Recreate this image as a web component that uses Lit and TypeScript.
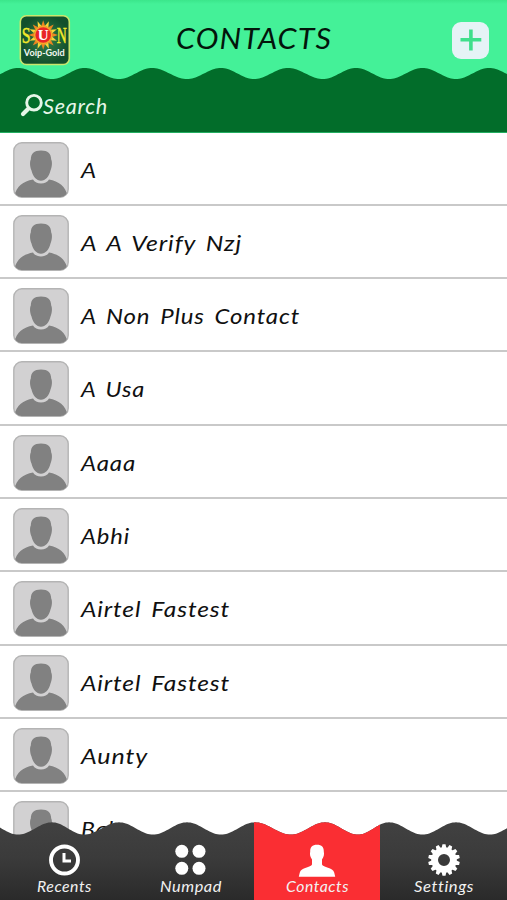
import { LitElement, html, css, svg } from "lit";
import { customElement, property } from "lit/decorators.js";

/** Closed shape with a flat bottom; its top edge swings between the given crest and trough positions. */
function wavePath(xs: number[], crestFirst: boolean, crestY: number, troughY: number, bottom: number) {
  const yAt = (i: number) => ((i % 2 === 0) === crestFirst ? crestY : troughY);
  let d = `M${xs[0]} ${bottom}`;
  for (let i = 0; i < xs.length - 1; i++) {
    for (let s = 0; s < 20; s++) {
      const t = s / 20;
      const k = (1 - Math.cos(t * Math.PI)) / 2;
      d += `L${(xs[i] + (xs[i + 1] - xs[i]) * t).toFixed(2)} ${(yAt(i) + (yAt(i + 1) - yAt(i)) * k).toFixed(2)}`;
    }
  }
  const last = xs.length - 1;
  return d + `L${xs[last]} ${yAt(last)}V${bottom}Z`;
}

const topWave = wavePath(
  [-15, 18, 52, 84.5, 119, 152, 187, 221, 254, 288, 323, 356, 389, 422.5, 456, 489, 523],
  false, 68, 79, 132.5
);
const bottomWave = wavePath(
  [-15, 18, 52, 84, 119, 153, 187, 221, 255, 291, 325, 358, 389, 422.5, 456, 490, 523],
  true, 2.3, 14.6, 80
);

const contacts: [string, number][] = [
  ["A", 16],
  ["A A Verify Nzj", 161],
  ["A Non Plus Contact", 219],
  ["A Usa", 64],
  ["Aaaa", 55],
  ["Abhi", 49],
  ["Airtel Fastest", 149],
  ["Airtel Fastest", 149],
  ["Aunty", 67],
  ["Bab", 40],
];

/** One line of slanted lettering, stretched to a given width. */
@customElement("script-label")
export class ScriptLabel extends LitElement {
  @property() text = "";
  @property({ type: Number }) width = 50;
  @property({ type: Number }) size = 22;

  static styles = css`
    :host { display: block; flex: none; }
    svg { display: block; overflow: visible; }
    text {
      font-family: Lato, "Open Sans", sans-serif; font-style: italic; fill: currentColor;
      font-variant-ligatures: none; letter-spacing: 0.035em; word-spacing: 0.14em;
    }
  `;

  render() {
    const h = Math.round(this.size * 1.2);
    return html`<svg width=${this.width} height=${h}>
      <text x="0" y=${this.size} font-size=${this.size} textLength=${this.width}
        lengthAdjust="spacingAndGlyphs">${this.text}</text>
    </svg>`;
  }
}

@customElement("contact-row")
export class ContactRow extends LitElement {
  @property() name = "";
  @property({ type: Number }) width = 50;

  static styles = css`
    :host {
      display: flex; box-sizing: border-box; height: 73.3px; flex: none;
      padding: 9.1px 0 0 13px; border-bottom: 2px solid #c9c9c9; color: #101010;
    }
    svg { flex: none; width: 56px; height: 56px; }
    script-label { margin: 14px 0 0 12px; }
  `;

  render() {
    return html`
      <svg viewBox="0 0 56 56">
        <defs><clipPath id="c"><rect x="1" y="1" width="54" height="54" rx="7.5" /></clipPath></defs>
        <rect x=".8" y=".8" width="54.4" height="54.4" rx="8" fill="#d2d1d2" stroke="#b4b4b4" stroke-width="1.4" />
        <g clip-path="url(#c)" fill="#818181">
          <path d="M1 56C3 44 10 39.500 20 37.500C21.500 40 24.500 41.500 28 41.500S34.500 40 36 37.500C46 39.500 53 44 55 56Z" />
          <path d="M28 8.500C35 8.500 38 11.500 38.200 17.500C39.500 20 39 25.500 37.500 28.500C36 34.500 32.500 38.800 28 38.800S20 34.500 18.500 28.500C17 25.500 16.500 20 17.800 17.500C18 11.500 21 8.500 28 8.500Z" />
        </g>
      </svg>
      <script-label text=${this.name} width=${this.width} size="22"></script-label>
    `;
  }
}

const clock = svg`<circle cx="16.500" cy="16" r="13.500" fill="none" stroke="#fff" stroke-width="3.900"/>
  <path d="M16 9V17H23" fill="none" stroke="#fff" stroke-width="3"/>`;
const dots = svg`<g fill="#fff"><circle cx="6.800" cy="7.300" r="6.500"/><circle cx="24" cy="7.300" r="6.500"/>
  <circle cx="6.800" cy="24.300" r="6.500"/><circle cx="24" cy="24.300" r="6.500"/></g>`;
const person = svg`<path fill="#fff" d="M16 .8C20.800 .8 23 3.300 22.800 7.500C23.400 10.500 22.800 13 21 15.500V20.500C22 23.500 32 23.500 33.200 28.500L34.200 32.800H-2.200L-1.200 28.500C0 23.500 10 23.500 11 20.500V15.500C9.200 13 8.600 10.500 9.200 7.500C9 3.300 11.200 .8 16 .8Z"/>`;
const teeth = Array.from({ length: 14 }, (_, i) => (i * 360) / 14);
const gear = svg`<g fill="#fff">${teeth.map(
  (a) => svg`<path transform="rotate(${a} 16 16)" d="M13.400 5L14.500 .2H17.500L18.600 5Z"/>`
)}</g><circle cx="16" cy="16" r="9.400" fill="none" stroke="#fff" stroke-width="6.800"/>`;

const tabs = [
  { label: "Recents", width: 55, icon: clock },
  { label: "Numpad", width: 62, icon: dots },
  { label: "Contacts", width: 63, icon: person },
  { label: "Settings", width: 60, icon: gear },
];

const rays = Array.from({ length: 16 }, (_, i) => i);

@customElement("app-root")
export class AppRoot extends LitElement {
  static styles = css`
    :host { display: block; }
    .screen {
      position: relative; display: flex; flex-direction: column;
      width: 507px; height: 900px; overflow: hidden; background: #fff;
    }
    .top { display: grid; flex: none; height: 132.5px; background: #44f198; }
    .top > * { grid-area: 1 / 1; min-height: 0; }
    .wave { display: block; }
    .content { display: flex; flex-direction: column; }
    .bar {
      display: grid; grid-template-columns: 158px 1fr 37px; height: 80px; box-sizing: border-box;
      padding: 14px 18px 0 18px;
    }
    .logo { width: 54px; height: 52px; overflow: visible; }
    .title { margin-top: 6.5px; color: #03150b; }
    .add { width: 37px; height: 37px; margin-top: 8px; }
    .search { display: flex; padding: 12px 0 0 20px; color: #e6f6e8; }
    .search svg { flex: none; width: 23px; height: 25px; }
    .search script-label { margin-top: 0.5px; }
    .list { display: flex; flex-direction: column; }
    .nav { position: absolute; left: 0; bottom: 0; width: 507px; height: 80px; display: grid; }
    .nav > * { grid-area: 1 / 1; }
    .tabs { display: grid; grid-template-columns: repeat(4, 126.5px); padding-left: 1px; color: #f2f2f2; }
    .tab { display: flex; flex-direction: column; align-items: center; padding-top: 24px; }
    .tab svg { width: 32px; height: 33px; overflow: visible; }
  `;

  render() {
    return html`<main class="screen">
      <header class="top">
        <svg class="wave" width="507" height="132.5">
          <defs>
            <linearGradient id="edge" x1="0" x2="0" y1="0" y2="1">
              <stop stop-color="#3be68b" /><stop offset="1" stop-color="#44f198" />
            </linearGradient>
          </defs>
          <rect width="507" height="4" fill="url(#edge)" />
          <path d=${topWave} fill="#026d2a" />
        </svg>
        <div class="content">
          <div class="bar">
            <svg class="logo" viewBox="0 0 54 52">
              <defs>
                <radialGradient id="g"><stop stop-color="#36814a" /><stop offset="1" stop-color="#124f2c" /></radialGradient>
              </defs>
              <rect x="2.300" y="1.700" width="49" height="48.800" rx="6" fill="url(#g)" stroke="#c9e66c" stroke-width="1.600" />
              ${rays.map((i) => svg`<path d="M23.300 12L25.200 6.200L27.100 12Z" fill=${i % 2 ? "#f6d63c" : "#ee8420"} transform="rotate(${i * 22.5} 25.200 21)" />`)}
              <circle cx="25.200" cy="21" r="9.400" fill="#f6a82a" />
              <circle cx="25.200" cy="21" r="7.800" fill="#e92527" />
              <g font-family="Liberation Serif, serif">
                <text x="3.800" y="29" font-size="24" textLength="8.800" lengthAdjust="spacingAndGlyphs" fill="#f4e92a" stroke="#f4e92a" stroke-width=".5">S</text>
                <text x="19.700" y="26.200" font-size="15.500" font-weight="bold" textLength="11" lengthAdjust="spacingAndGlyphs" fill="#fff">U</text>
                <text x="38.700" y="29" font-size="24" textLength="10" lengthAdjust="spacingAndGlyphs" fill="#f4e92a" stroke="#f4e92a" stroke-width=".5">N</text>
              </g>
              <text x="5.800" y="41.900" font-family="Lato, sans-serif" font-weight="bold" font-size="9.500" textLength="41" lengthAdjust="spacingAndGlyphs" fill="#f2f7f2">Voip-Gold</text>
            </svg>
            <script-label class="title" text="CONTACTS" width="156" size="28"></script-label>
            <svg class="add" viewBox="0 0 37 37">
              <rect width="37" height="37" rx="9" fill="#e5f3f6" />
              <path d="M18.900 7.500V28.500M8.500 17.800H29.300" stroke="#3fdf8b" stroke-width="3.600" />
            </svg>
          </div>
          <div class="search">
            <svg viewBox="0 0 23 25" fill="none" stroke="#e6f6e8" stroke-linecap="round">
              <circle cx="14" cy="10.700" r="7.300" stroke-width="2.900" />
              <path d="M8.300 16.700L3 22" stroke-width="4.200" />
            </svg>
            <script-label text="Search" width="65" size="21"></script-label>
          </div>
        </div>
      </header>
      <section class="list">
        ${contacts.map(([n, w]) => html`<contact-row name=${n} width=${w}></contact-row>`)}
      </section>
      <nav class="nav">
        <svg width="507" height="80">
          <defs>
            <linearGradient id="dark" gradientUnits="userSpaceOnUse" x1="0" x2="0" y1="2" y2="80">
              <stop stop-color="#414141" /><stop offset=".45" stop-color="#3b3b3b" /><stop offset="1" stop-color="#2a2a2a" />
            </linearGradient>
            <clipPath id="active"><rect x="254" width="126" height="80" /></clipPath>
          </defs>
          <path d=${bottomWave} fill="url(#dark)" />
          <path d=${bottomWave} fill="#fa2e33" clip-path="url(#active)" />
        </svg>
        <div class="tabs">
          ${tabs.map((t) => html`<div class="tab">
            <svg viewBox="0 0 32 33">${t.icon}</svg>
            <script-label text=${t.label} width=${t.width} size="15"></script-label>
          </div>`)}
        </div>
      </nav>
    </main>`;
  }
}
